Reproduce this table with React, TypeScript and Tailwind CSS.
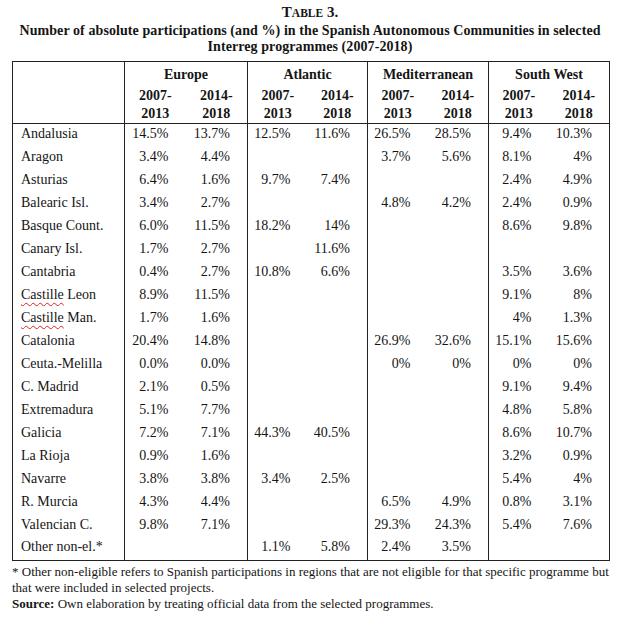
const ROWS: [string, string[]][] = [
  ["Andalusia", ["14.5%", "13.7%", "12.5%", "11.6%", "26.5%", "28.5%", "9.4%", "10.3%"]],
  ["Aragon", ["3.4%", "4.4%", "", "", "3.7%", "5.6%", "8.1%", "4%"]],
  ["Asturias", ["6.4%", "1.6%", "9.7%", "7.4%", "", "", "2.4%", "4.9%"]],
  ["Balearic Isl.", ["3.4%", "2.7%", "", "", "4.8%", "4.2%", "2.4%", "0.9%"]],
  ["Basque Count.", ["6.0%", "11.5%", "18.2%", "14%", "", "", "8.6%", "9.8%"]],
  ["Canary Isl.", ["1.7%", "2.7%", "", "11.6%", "", "", "", ""]],
  ["Cantabria", ["0.4%", "2.7%", "10.8%", "6.6%", "", "", "3.5%", "3.6%"]],
  ["Castille Leon", ["8.9%", "11.5%", "", "", "", "", "9.1%", "8%"]],
  ["Castille Man.", ["1.7%", "1.6%", "", "", "", "", "4%", "1.3%"]],
  ["Catalonia", ["20.4%", "14.8%", "", "", "26.9%", "32.6%", "15.1%", "15.6%"]],
  ["Ceuta.-Melilla", ["0.0%", "0.0%", "", "", "0%", "0%", "0%", "0%"]],
  ["C. Madrid", ["2.1%", "0.5%", "", "", "", "", "9.1%", "9.4%"]],
  ["Extremadura", ["5.1%", "7.7%", "", "", "", "", "4.8%", "5.8%"]],
  ["Galicia", ["7.2%", "7.1%", "44.3%", "40.5%", "", "", "8.6%", "10.7%"]],
  ["La Rioja", ["0.9%", "1.6%", "", "", "", "", "3.2%", "0.9%"]],
  ["Navarre", ["3.8%", "3.8%", "3.4%", "2.5%", "", "", "5.4%", "4%"]],
  ["R. Murcia", ["4.3%", "4.4%", "", "", "6.5%", "4.9%", "0.8%", "3.1%"]],
  ["Valencian C.", ["9.8%", "7.1%", "", "", "29.3%", "24.3%", "5.4%", "7.6%"]],
  ["Other non-el.*", ["", "", "1.1%", "5.8%", "2.4%", "3.5%", "", ""]],
];

const GROUPS = ["Europe", "Atlantic", "Mediterranean", "South West"];

// region names flagged by the spell checker in the source document
function RegionName({ name }: { name: string }) {
  if (name.startsWith("Castille ")) {
    return (
      <>
        <span className="underline decoration-wavy decoration-[#e02020] decoration-1 underline-offset-[3px]">Castille</span>
        {name.slice(8)}
      </>
    );
  }
  return <>{name}</>;
}

export default function App() {
  return (
    <div className="w-[620px] h-[618px] bg-white text-[#151515] font-['Liberation_Serif',serif]">
      <div className="pt-[2px] text-center font-bold">
        <div className="text-[15px] leading-[20px]">
          T<span className="text-[11.5px]">ABLE</span> 3.
        </div>
        <div className="text-[14px] leading-[16px] whitespace-nowrap tracking-[0.08px]">
          Number of absolute participations (and %) in the Spanish Autonomous Communities in selected
          <br />
          Interreg programmes (2007-2018)
        </div>
      </div>

      <table className="ml-[12px] mt-[6px] w-[597px] table-fixed border-collapse border border-[#222] text-[14px]">
        <colgroup>
          <col className="w-[112px]" />
          <col className="w-[61px]" />
          <col className="w-[62px]" />
          <col className="w-[60px]" />
          <col className="w-[60px]" />
          <col className="w-[60px]" />
          <col className="w-[61px]" />
          <col className="w-[60px]" />
          <col className="w-[61px]" />
        </colgroup>
        <thead className="font-bold">
          <tr className="h-[22px]">
            <th rowSpan={2} className="border border-[#222]" />
            {GROUPS.map((g) => (
              <th key={g} colSpan={2} className="border-x border-[#222] p-0 pt-[4px] text-center font-bold leading-[18px]">
                {g}
              </th>
            ))}
          </tr>
          <tr className="border-b border-[#222]">
            {GROUPS.map((g) => (
              <>
                <th key={g + "a"} className="border-l border-[#222] p-0 pt-[3px] text-center font-bold leading-[18px]">
                  2007-
                  <br />
                  2013
                </th>
                <th key={g + "b"} className="p-0 pt-[3px] text-center font-bold leading-[18px]">
                  2014-
                  <br />
                  2018
                </th>
              </>
            ))}
          </tr>
        </thead>
        <tbody>
          {ROWS.map(([name, vals]) => (
            <tr key={name} className="h-[23px]">
              <td className="border-r border-[#222] pl-[8px] pb-[4px] leading-[17px] whitespace-nowrap">
                <RegionName name={name} />
              </td>
              {vals.map((v, i) => (
                <td
                  key={i}
                  className={
                    "pr-[17px] pb-[4px] leading-[17px] text-right whitespace-nowrap " +
                    (i % 2 === 1 ? "border-r border-[#222]" : "")
                  }
                >
                  {v}
                </td>
              ))}
            </tr>
          ))}
        </tbody>
      </table>

      <div className="mt-[3px] ml-[12px] text-[13px] leading-[16px] whitespace-nowrap">
        * Other non-eligible refers to Spanish participations in regions that are not eligible for that specific programme but
        <br />
        that were included in selected projects.
        <br />
        <span className="font-bold">Source:</span> Own elaboration by treating official data from the selected programmes.
      </div>
    </div>
  );
}
